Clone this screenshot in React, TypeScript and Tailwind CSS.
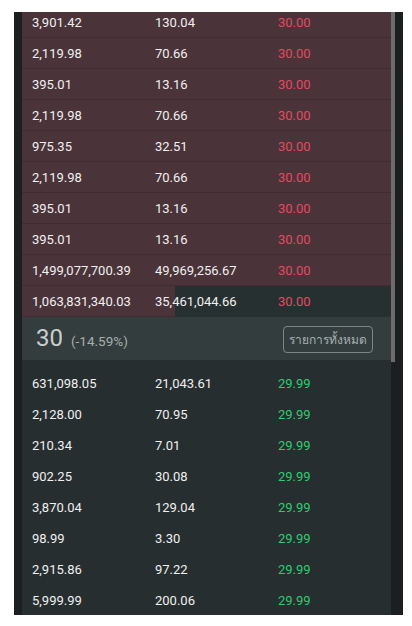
import React from 'react'

const asks = [
  ['3,901.42', '130.04', 100],
  ['2,119.98', '70.66', 100],
  ['395.01', '13.16', 100],
  ['2,119.98', '70.66', 100],
  ['975.35', '32.51', 100],
  ['2,119.98', '70.66', 100],
  ['395.01', '13.16', 100],
  ['395.01', '13.16', 100],
  ['1,499,077,700.39', '49,969,256.67', 100],
  ['1,063,831,340.03', '35,461,044.66', 41.5],
] as const

const bids = [
  ['631,098.05', '21,043.61'],
  ['2,128.00', '70.95'],
  ['210.34', '7.01'],
  ['902.25', '30.08'],
  ['3,870.04', '129.04'],
  ['98.99', '3.30'],
  ['2,915.86', '97.22'],
  ['5,999.99', '200.06'],
]

export default function App() {
  return (
    <div className="w-[412px] h-[626px] bg-white pt-[12px] pl-[14px]" style={{ fontFamily: 'Roboto, "Liberation Sans", sans-serif' }}>
      <div className="w-[389px] h-[603px] bg-[#1b1f1f] flex pl-[8px]">
        {/* list */}
        <div className="w-[369px] h-full overflow-hidden">
          <div className="-mt-[5px]">
            {asks.map(([a, b, pct], i) => (
              <div key={i} className="relative h-[31px] bg-[#273031]">
                <div
                  className="absolute left-0 top-0 bottom-0 bg-[#4a3339] border-b border-[#402d33]"
                  style={{ width: `${pct}%` }}
                />
                <div className="relative flex items-center h-full text-[13px] text-[#f0f0f0]">
                  <span className="w-[133px] pl-[10px]">{a}</span>
                  <span className="w-[123px]">{b}</span>
                  <span className="text-[#e34a62]">30.00</span>
                </div>
              </div>
            ))}

            <div className="h-[43px] bg-[#333d3d] flex items-center justify-between pl-[14px] pr-[18px]">
              <div className="flex items-baseline gap-[8px]">
                <span className="text-[24px] text-[#c9cecd] leading-none">30</span>
                <span className="text-[13.5px] text-[#a8aeae]">(-14.59%)</span>
              </div>
              <button className="h-[27px] px-[5px] border border-[#7b8687] rounded-[4px] text-[12px] text-[#a5b0b2] mt-[2px]" style={{ fontFamily: '"Noto Sans", "DejaVu Sans", sans-serif' }}>
                รายการทั้งหมด
              </button>
            </div>

            <div className="bg-[#262e2f] pt-[8px]">
              {bids.map(([a, b], i) => (
                <div key={i} className="h-[31px] flex items-center text-[13px] text-[#f0f0f0]">
                  <span className="w-[133px] pl-[10px]">{a}</span>
                  <span className="w-[123px]">{b}</span>
                  <span className="text-[#2ecc71]">29.99</span>
                </div>
              ))}
            </div>
          </div>
        </div>
        {/* scrollbar */}
        <div className="w-[4px] h-full">
          <div className="h-[350px] bg-[#6c6c6c]" />
        </div>
      </div>
    </div>
  )
}
